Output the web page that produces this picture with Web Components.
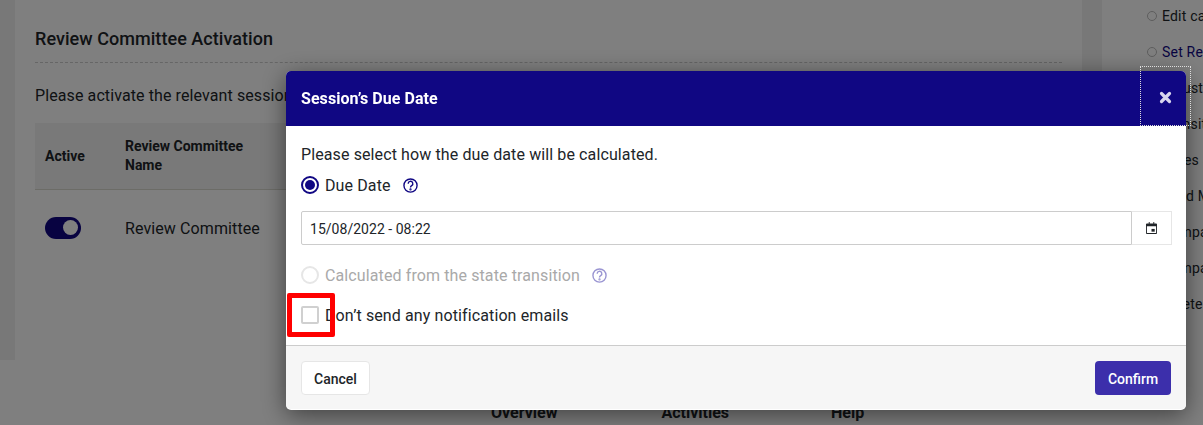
<!DOCTYPE html>
<html>
<head>
<meta charset="utf-8">
<style>
  html, body { margin: 0; height: 100%; overflow: hidden; }
  body { font-family: Roboto, "Liberation Sans", sans-serif; background: #fff; }
</style>
</head>
<body>
<page-shell>
  <committee-card></committee-card>
  <action-list slot="side"></action-list>
</page-shell>
<modal-backdrop></modal-backdrop>
<due-date-dialog></due-date-dialog>

<script>
class PageShell extends HTMLElement {
  constructor() {
    super();
    this.attachShadow({mode: 'open'});
    this.shadowRoot.innerHTML = `
      <style>
        :host { display: block; width: 1203px; height: 425px; overflow: hidden; background: #fff; color: #212529; }
        .main { display: flex; height: 360px; padding-left: 15px; gap: 20px; background: #f0f0f0; }
        .left { width: 1067px; background: #fff; }
        .side { flex: 1; background: #fff; overflow: hidden; }
        footer { display: flex; height: 65px; padding: 44px 0 0 491px; box-sizing: border-box; gap: 104px;
          font-size: 16px; font-weight: 700; line-height: 18px; }
        footer span:last-child { margin-left: -2px; }
      </style>
      <div class="main">
        <div class="left"><slot></slot></div>
        <div class="side"><slot name="side"></slot></div>
      </div>
      <footer><span>Overview</span><span>Activities</span><span>Help</span></footer>
    `;
  }
}

class CommitteeCard extends HTMLElement {
  constructor() {
    super();
    this.attachShadow({mode: 'open'});
    this.shadowRoot.innerHTML = `
      <style>
        :host { display: block; padding: 28px 20px 0; font-size: 16px; color: #212529; letter-spacing: .1px; }
        h2 { margin: 0; font-size: 18px; font-weight: 500; line-height: 21px; padding-bottom: 13px; border-bottom: 1px dashed #ccc; letter-spacing: .05px; }
        p { margin: 0; padding-top: 22px; line-height: 22px; height: 38px; }
        .head { display: flex; height: 67px; background: #f2f2f2; border-bottom: 1px solid #d8d8cf; box-sizing: border-box;
          align-items: center; font-size: 14px; font-weight: 700; line-height: 19px; letter-spacing: 0; }
        .row { display: flex; align-items: center; height: 75px; }
        .row span { padding-top: 2px; }
        .c1 { width: 90px; padding-left: 10px; box-sizing: border-box; flex: none; }
        .c2 { width: 130px; }
        .toggle { display: flex; align-items: center; justify-content: flex-end; width: 36px; height: 22px;
          border-radius: 11px; background: #100783; padding-right: 3px; box-sizing: border-box; }
        .toggle i { width: 15px; height: 15px; border-radius: 50%; background: #fff; }
      </style>
      <h2>Review Committee Activation</h2>
      <p>Please activate the relevant sessions</p>
      <div class="head"><div class="c1">Active</div><div class="c2">Review Committee Name</div></div>
      <div class="row"><div class="c1"><div class="toggle"><i></i></div></div><span>Review Committee</span></div>
    `;
  }
}

class ActionList extends HTMLElement {
  constructor() {
    super();
    this.attachShadow({mode: 'open'});
    const items = [
      ['Edit campaign', ''], ['Set Review', 'link'], ['Adjust', ''], ['Transition', ''],
      ['Dates and', ''], ['Send Mail', ''], ['Compare', ''], ['Compare', ''], ['Delete', '']
    ];
    this.shadowRoot.innerHTML = `
      <style>
        :host { display: block; margin-top: -2px; padding-left: 45px; font-size: 14px; letter-spacing: .2px; color: #212529; }
        div { display: flex; align-items: center; gap: 5px; height: 36px; white-space: nowrap; }
        i { width: 8px; height: 8px; border: 1px solid #bbb; border-radius: 50%; flex: none; }
        .link { color: #100783; }
      </style>
      ${items.map(([t, c]) => `<div class="${c}"><i></i><span>${t}</span></div>`).join('')}
    `;
  }
}

class ModalBackdrop extends HTMLElement {
  constructor() {
    super();
    this.attachShadow({mode: 'open'});
    this.shadowRoot.innerHTML = `
      <style>
        :host { display: block; position: fixed; inset: 0; background: rgba(0, 0, 0, .5); }
      </style>
    `;
  }
}

class DueDateDialog extends HTMLElement {
  constructor() {
    super();
    this.attachShadow({mode: 'open'});
    this.shadowRoot.innerHTML = `
      <style>
        :host { display: block; position: fixed; left: 286px; top: 71px; width: 900px; height: 339px;
          background: #fff; border-radius: 5px; color: #212529; font-size: 16px; letter-spacing: .11px;
          box-shadow: 0 5px 25px rgba(0, 0, 0, .5); }
        header { display: flex; align-items: center; justify-content: space-between; height: 55px;
          background: #100783; color: #fff; padding-left: 15px; border-radius: 5px 5px 0 0; box-sizing: border-box; }
        h1 { margin: 0; font-size: 16px; font-weight: 700; letter-spacing: .06px; }
        .close { display: flex; align-items: center; justify-content: center; width: 51px; height: 60px;
          margin: -5px -5px 0 0; align-self: flex-start; outline: 1px dotted #ddd; outline-offset: -1px; }
        .close svg { margin-top: 2px; }
        .body { position: relative; height: 220px; padding: 16px 14px 0 15px; box-sizing: border-box; line-height: 24px;
          background: #fff; border-bottom: 1px solid #ccc; }
        .line { display: flex; align-items: center; height: 28px; gap: 6px; }
        .line span { padding-top: 2px; }
        .intro { height: 24px; margin-bottom: 5px; padding-top: 1px; box-sizing: border-box; }
        .mark { width: 18px; height: 18px; flex: none; box-sizing: border-box; }
        .radio { border-radius: 50%; border: 2.5px solid #100783; padding: 1.5px; }
        .radio i { display: block; width: 10px; height: 10px; border-radius: 50%; background: #100783; }
        .radio.off { border: 2px solid #e6e6e6; }
        .box { border: 2px solid #d0d0d0; border-radius: 2px; }
        .off-text { color: #a9a9a9; }
        .help { margin-left: 6px; }
        .date { display: flex; height: 34px; margin: 12px 0 16px; }
        .date .val { flex: 1; border: 1px solid #ccc; border-radius: 2px 0 0 2px; padding: 1px 0 0 8px; line-height: 32px; font-size: 14px; letter-spacing: .03px; }
        .date .btn { display: flex; width: 40px; flex: none; align-items: center; justify-content: center; border: 1px solid #e6e6e6; border-left: 0; box-sizing: border-box; }
        .check { position: relative; margin-top: 12px; }
        .flag { position: absolute; left: -14px; top: -8px; width: 48px; height: 44px; border: 5px solid #f00; box-sizing: border-box; border-radius: 2px; }
        footer { display: flex; justify-content: space-between; align-items: center; height: 63px; padding: 0 15px;
          background: #f6f6f6; border-radius: 0 0 5px 5px; box-sizing: border-box; }
        button { font: 500 14px Roboto, "Liberation Sans", sans-serif; height: 34px; border-radius: 4px; padding: 2px 0 0; }
        .cancel { width: 69px; background: #fff; color: #212529; border: 1px solid #e6e6e6; }
        .confirm { width: 76px; background: #3c2fab; color: #fff; border: 0; }
      </style>
      <header>
        <h1>Session’s Due Date</h1>
        <div class="close"><svg width="13" height="13" viewBox="0 0 13 13"><path d="M2.5 2.5l8 8M10.5 2.5l-8 8" stroke="#d8d6ee" stroke-width="3.2" stroke-linecap="round"/></svg></div>
      </header>
      <div class="body">
        <div class="intro">Please select how the due date will be calculated.</div>
        <div class="line"><div class="mark radio"><i></i></div><span>Due Date</span>
          <svg class="help" width="15" height="15" viewBox="0 0 24 24" fill="none" stroke="#100783" stroke-width="2.2"><circle cx="12" cy="12" r="10.5"/><path d="M8.3 9.2a3.7 3.7 0 1 1 5.6 3c-1.2.7-1.9 1.3-1.9 2.8"/><circle cx="12" cy="18.2" r=".7"/></svg>
        </div>
        <div class="date"><div class="val">15/08/2022 - 08:22</div><div class="btn">
          <svg width="11" height="12" viewBox="0 0 12 13"><path d="M1 1.5h2V0h1v1.5h4V0h1v1.5h2a1 1 0 0 1 1 1V12a1 1 0 0 1-1 1H1a1 1 0 0 1-1-1V2.5a1 1 0 0 1 1-1zM1 4.5V12h10V4.5z" fill="#212529"/><rect x="6" y="7.5" width="3.5" height="3" fill="#212529"/></svg>
        </div></div>
        <div class="line off-text"><div class="mark radio off"></div><span>Calculated from the state transition</span>
          <svg class="help" width="15" height="15" viewBox="0 0 24 24" fill="none" stroke="#9a95d2" stroke-width="2.2"><circle cx="12" cy="12" r="10.5"/><path d="M8.3 9.2a3.7 3.7 0 1 1 5.6 3c-1.2.7-1.9 1.3-1.9 2.8"/><circle cx="12" cy="18.2" r=".7"/></svg>
        </div>
        <div class="line check"><div class="mark box"></div><span>Don’t send any notification emails</span><div class="flag"></div></div>
      </div>
      <footer><button class="cancel">Cancel</button><button class="confirm">Confirm</button></footer>
    `;
  }
}

customElements.define('page-shell', PageShell);
customElements.define('committee-card', CommitteeCard);
customElements.define('action-list', ActionList);
customElements.define('modal-backdrop', ModalBackdrop);
customElements.define('due-date-dialog', DueDateDialog);
</script>
</body>
</html>
